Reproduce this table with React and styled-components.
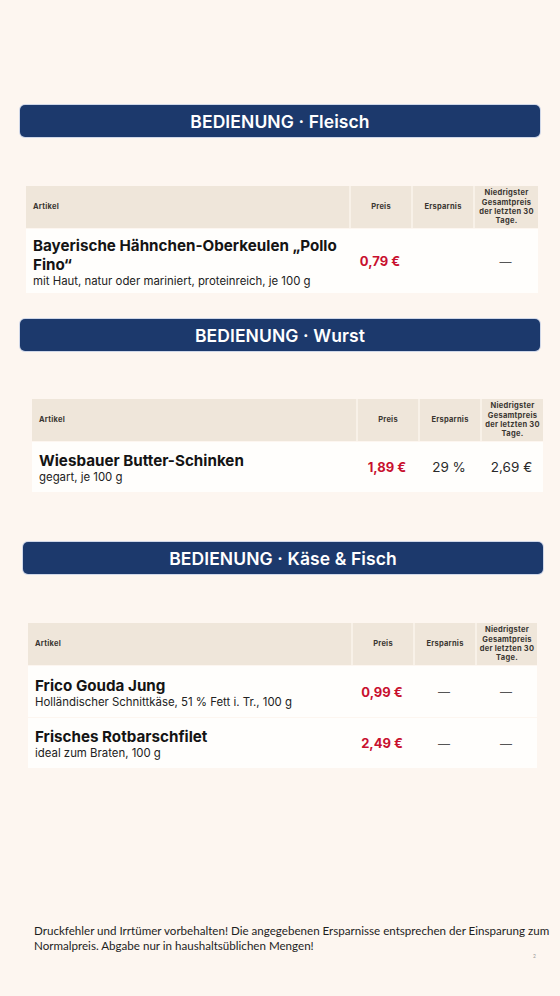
import React from "react";
import styled, { createGlobalStyle } from "styled-components";

const Global = createGlobalStyle`
  html, body { margin: 0; padding: 0; background: #fdf6f0; }
  body { font-family: Inter, "Noto Sans", sans-serif; }
`;

const Page = styled.div`
  width: 560px;
  min-height: 996px;
  background: #fdf6f0;
  padding-top: 105px;
  box-sizing: border-box;
  display: flex;
  flex-direction: column;
`;

const Banner = styled.div`
  margin: ${(p) => p.$mt || 0}px ${(p) => p.$right}px 0 ${(p) => p.$left}px;
  height: 32px;
  background: #1c396c;
  border-radius: 5px;
  box-shadow: 0 0 0 1px rgba(170, 190, 225, 0.55);
  display: flex;
  align-items: center;
  justify-content: center;
  padding-top: 1px;
  box-sizing: border-box;
  color: #ffffff;
  font-family: Inter, sans-serif;
  font-weight: 600;
  font-size: 17.5px;
  letter-spacing: 0.1px;
`;

const Table = styled.div`
  margin: ${(p) => p.$mt}px ${(p) => p.$right}px 0 ${(p) => p.$left}px;
  display: flex;
  flex-direction: column;
  gap: 1px;
`;

const HeadRow = styled.div`
  display: grid;
  grid-template-columns: ${(p) => p.$first}px 62px 62px 1fr;
  height: 42px;
  background: #efe6da;
`;

const HeadCell = styled.div`
  display: flex;
  align-items: center;
  justify-content: ${(p) => (p.$left ? "flex-start" : "center")};
  padding: ${(p) => (p.$left ? "0 7px" : "0 1px")};
  border-left: ${(p) => (p.$left ? "none" : "2px solid #f8f1e8")};
  font-family: Inter, sans-serif;
  font-weight: 700;
  font-size: 7.5px;
  line-height: 9.4px;
  letter-spacing: 0.25px;
  color: #3a3631;
  text-align: center;
`;

const BodyRow = styled.div`
  display: grid;
  grid-template-columns: ${(p) => p.$first}px 62px 62px 1fr;
  min-height: ${(p) => p.$h}px;
  background: #fffefc;
  align-items: center;
`;

const ItemCell = styled.div`
  padding: 2px 2px 0 7px;
  display: flex;
  flex-direction: column;
`;

const Name = styled.div`
  font-family: Inter, sans-serif;
  font-weight: 700;
  font-size: 15.2px;
  line-height: 19px;
  color: #141414;
`;

const Desc = styled.div`
  font-family: Inter, sans-serif;
  font-weight: 400;
  font-size: 11.4px;
  line-height: 15px;
  color: #222;
`;

const Price = styled.div`
  text-align: center;
  font-family: Inter, sans-serif;
  font-weight: 700;
  font-size: 13px;
  color: #c8102e;
`;

const Value = styled.div`
  text-align: center;
  font-family: Inter, sans-serif;
  font-weight: 400;
  font-size: 13.5px;
  color: #2a2a2a;
`;

const Dash = styled.div`
  text-align: center;
  font-family: Inter, sans-serif;
  font-size: 12px;
  color: #555;
`;

const Footer = styled.div`
  margin: ${(p) => p.$mt}px 4px 0 34px;
  position: relative;
  font-family: Lato, "Open Sans", sans-serif;
  font-size: 11.6px;
  line-height: 15px;
  color: #1e1e1e;
`;

const PageNum = styled.span`
  position: absolute;
  right: 20px;
  top: 31px;
  font-size: 5px;
  line-height: 5px;
  color: #999;
`;

const Header = ({ first }) => (
  <HeadRow $first={first}>
    <HeadCell $left>Artikel</HeadCell>
    <HeadCell>Preis</HeadCell>
    <HeadCell>Ersparnis</HeadCell>
    <HeadCell>
      Niedrigster
      <br />
      Gesamtpreis
      <br />
      der letzten 30
      <br />
      Tage.
    </HeadCell>
  </HeadRow>
);

const Cell = ({ v }) => (v === "—" ? <Dash>—</Dash> : v ? <Value>{v}</Value> : <div />);

const Row = ({ first, h, name, desc, price, save, low }) => (
  <BodyRow $first={first} $h={h}>
    <ItemCell>
      <Name>{name}</Name>
      <Desc>{desc}</Desc>
    </ItemCell>
    <Price>{price}</Price>
    <Cell v={save} />
    <Cell v={low} />
  </BodyRow>
);

export default function App() {
  return (
    <>
      <Global />
      <Page>
        <Banner $left={20} $right={20}>BEDIENUNG · Fleisch</Banner>
        <Table $mt={49} $left={26} $right={22}>
          <Header first={323} />
          <Row
            first={323}
            h={64}
            name="Bayerische Hähnchen-Oberkeulen „Pollo Fino“"
            desc="mit Haut, natur oder mariniert, proteinreich, je 100 g"
            price="0,79 €"
            save=""
            low="—"
          />
        </Table>

        <Banner $mt={26} $left={20} $right={20}>BEDIENUNG · Wurst</Banner>
        <Table $mt={48} $left={32} $right={17}>
          <Header first={324} />
          <Row
            first={324}
            h={50}
            name="Wiesbauer Butter-Schinken"
            desc="gegart, je 100 g"
            price="1,89 €"
            save="29 %"
            low="2,69 €"
          />
        </Table>

        <Banner $mt={50} $left={23} $right={17}>BEDIENUNG · Käse &amp; Fisch</Banner>
        <Table $mt={49} $left={28} $right={23}>
          <Header first={323} />
          <Row
            first={323}
            h={51}
            name="Frico Gouda Jung"
            desc="Holländischer Schnittkäse, 51 % Fett i. Tr., 100 g"
            price="0,99 €"
            save="—"
            low="—"
          />
          <Row
            first={323}
            h={50}
            name="Frisches Rotbarschfilet"
            desc="ideal zum Braten, 100 g"
            price="2,49 €"
            save="—"
            low="—"
          />
        </Table>

        <Footer $mt={155}>
          Druckfehler und Irrtümer vorbehalten! Die angegebenen Ersparnisse entsprechen der Einsparung zum
          Normalpreis. Abgabe nur in haushaltsüblichen Mengen!
          <PageNum>2</PageNum>
        </Footer>
      </Page>
    </>
  );
}
